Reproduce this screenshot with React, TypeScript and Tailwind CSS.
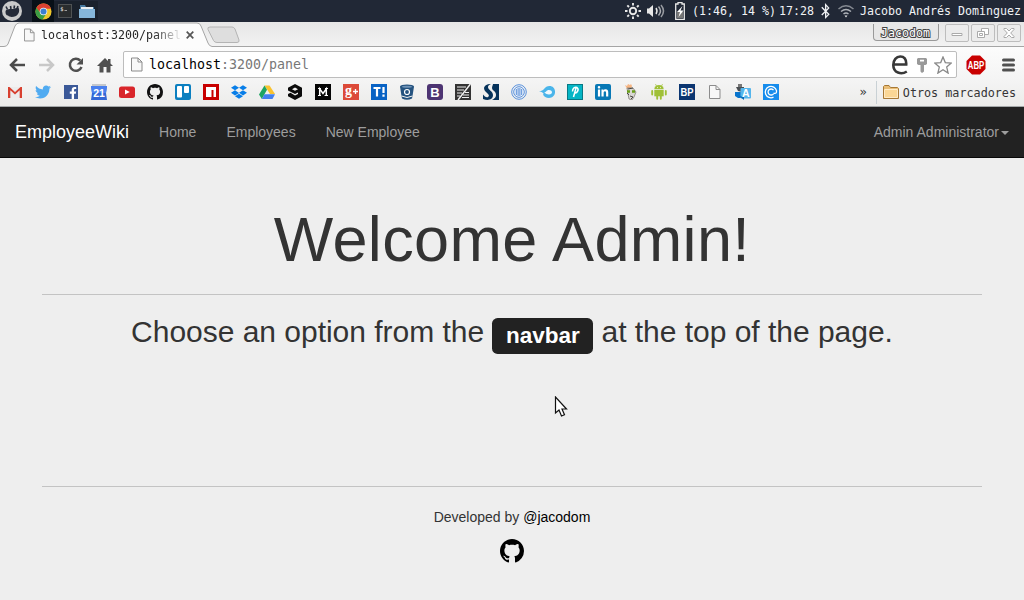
import type { ReactNode } from "react";
import { FaTwitter, FaFacebookF, FaDropbox, FaLinkedinIn, FaBluetoothB } from "react-icons/fa";

const GITHUB_MARK =
  "M8 0C3.58 0 0 3.58 0 8c0 3.54 2.29 6.53 5.47 7.59.4.07.55-.17.55-.38 0-.19-.01-.82-.01-1.49-2.01.37-2.53-.49-2.69-.94-.09-.23-.48-.94-.82-1.13-.28-.15-.68-.52-.01-.53.63-.01 1.08.58 1.23.82.72 1.21 1.87.87 2.33.66.07-.52.28-.87.51-1.07-1.78-.2-3.64-.89-3.64-3.95 0-.87.31-1.59.82-2.15-.08-.2-.36-1.02.08-2.12 0 0 .67-.21 2.2.82.64-.18 1.32-.27 2-.27s1.36.09 2 .27c1.53-1.04 2.2-.82 2.2-.82.44 1.1.16 1.92.08 2.12.51.56.82 1.27.82 2.15 0 3.07-1.87 3.75-3.65 3.95.29.25.54.73.54 1.48 0 1.07-.01 1.93-.01 2.2 0 .21.15.46.55.38A8.01 8.01 0 0 0 16 8c0-4.42-3.58-8-8-8z";

function GithubMark({ className }: { className: string }) {
  return (
    <svg viewBox="0 0 16 16" className={className} fill="currentColor">
      <path d={GITHUB_MARK} />
    </svg>
  );
}

function Icon16({ children }: { children: ReactNode }) {
  return (
    <svg viewBox="0 0 16 16" className="h-4 w-4 shrink-0">
      {children}
    </svg>
  );
}

function PageIcon({ className }: { className: string }) {
  return (
    <svg viewBox="0 0 12 14" className={className} fill="#f8f8f8" stroke="#8c8c8c">
      <path d="M.5.5h6.5l4 4v9H.5z" />
      <path d="M7 .5v4h4" fill="none" />
    </svg>
  );
}

function Glyph({ x = 8, y, size, children, family = "Liberation Sans, sans-serif", fill = "#fff", weight = 700 }: {
  x?: number; y: number; size: number; children: string; family?: string; fill?: string; weight?: number;
}) {
  return (
    <text x={x} y={y} fontSize={size} fontFamily={family} fontWeight={weight} fill={fill} textAnchor="middle">
      {children}
    </text>
  );
}

const bookmarks: ReactNode[] = [
  <Icon16>
    <path d="M1 3h14v11H1z" fill="#ececec" />
    <path d="M1 14V3h1.500L8 8l5.500-5H15v11h-2.300V6.200L8 10.400 3.300 6.200V14z" fill="#d8402f" />
  </Icon16>,
  <FaTwitter className="h-4 w-4 text-[#50abf1]" />,
  <span className="flex h-3.5 w-3.5 items-end justify-end bg-[#3b5998]">
    <FaFacebookF className="h-3 w-2.5 text-white" />
  </span>,
  <Icon16>
    <path d="M1 0h14v3H1z" fill="#c5c8cc" />
    <path d="M0 2h16l-1 7 1 7H0l1-7z" fill="#3367d6" />
    <path d="M0 2h16l-1 7H1z" fill="#4a80ee" />
    <Glyph y={12.8} size={10.5}>21</Glyph>
  </Icon16>,
  <Icon16>
    <rect y="2.500" width="16" height="11.500" rx="2.500" fill="#d9252a" />
    <path d="M6 5.500v5l4.800-2.500z" fill="#fff" />
  </Icon16>,
  <GithubMark className="h-4 w-4 text-[#111]" />,
  <Icon16>
    <rect width="16" height="16" rx="2" fill="#0b7fc0" />
    <rect x="2" y="2" width="5" height="11.500" rx="1" fill="#fff" />
    <rect x="9" y="2" width="5" height="7" rx="1" fill="#fff" />
  </Icon16>,
  <Icon16>
    <path d="M0 0h16v16H0z" fill="#c80000" />
    <path d="M3 3h10v10h-2.500V6H8.500v7H3z" fill="#fff" />
  </Icon16>,
  <FaDropbox className="h-4 w-4 text-[#087ee8]" />,
  <Icon16>
    <path d="M5.500 1.500h5L16 10h-5z" fill="#f9c22e" />
    <path d="M5.500 1.500 8 5.800 2.800 15 0 10.500z" fill="#1da462" />
    <path d="M5.500 10.300H16L13.500 15H2.800z" fill="#4280ef" />
  </Icon16>,
  <Icon16>
    <path d="M8 0 15 3.800v8.400L8 16l-7-3.700V10l2.500-1.200L8 11.500l3-1.600V8.500L8 10 1 6.500V3.800z" fill="#0b0b0b" />
    <path d="M5 5.200 8 3.500l3 1.700-3 1.600z" fill="#f0f0ef" />
  </Icon16>,
  <Icon16>
    <path d="M0 0h16v16H0z" fill="#050505" />
    <path d="M3 4.500h3M10 4.500h3M3 11.500h3M9.500 11.500H13" stroke="#fff" strokeWidth="1" />
    <path d="M4.700 11.500V4.800L8 9.500l3.300-4.700v6.700" fill="none" stroke="#fff" strokeWidth="1.500" />
  </Icon16>,
  <Icon16>
    <path d="M0 0h16v16H0z" fill="#dc4a38" />
    <Glyph x={5.5} y={10.8} size={14} family="Liberation Serif, serif" weight={700}>g</Glyph>
    <path d="M10 7.500h5M12.500 5v5" stroke="#fff" strokeWidth="1.300" />
  </Icon16>,
  <Icon16>
    <path d="M0 0h16v16H0z" fill="#0862c4" />
    <path d="M2.500 4h7M6 4v8.500M12.500 3v6M12.500 10.500v2.200" stroke="#fff" strokeWidth="2.200" />
  </Icon16>,
  <Icon16>
    <path d="m1 2.500 1.500 9.500L3 14.500q5 2.500 10 0l.5-2.500L15 2.500z" fill="#25537f" />
    <ellipse cx="8" cy="2.500" rx="7" ry="2" fill="#25537f" />
    <ellipse cx="8" cy="2.700" rx="5" ry="1" fill="#6f93b6" />
    <circle cx="8" cy="8" r="2.500" fill="#25537f" stroke="#fff" strokeWidth="1.200" />
    <path d="M2.500 12q5.500 3 11 0" fill="none" stroke="#f0f0ef" />
  </Icon16>,
  <Icon16>
    <rect width="16" height="16" rx="3" fill="#4d3472" />
    <Glyph y={12.5} size={13}>B</Glyph>
  </Icon16>,
  <Icon16>
    <path d="M0 0h16v16H0z" fill="#333" />
    <path d="M2 3h9M2 6h7M2 9h5M2 12h3M10 8.500h4M8 11h6M7 13.500h7" stroke="#eee" strokeWidth="1.100" />
    <path d="M15.500 0 3 16" stroke="#f4f4f4" strokeWidth="1.500" />
  </Icon16>,
  <Icon16>
    <path d="M10 0h6v16H9c4-2 5-5 3-8-1-1.500-3-2-3-4s1-3 1-4z" fill="#06335b" />
    <path d="M8 0C2 0-.5 3.500 2 7c2 2.500 5 3.500 3.500 5.500C4 14.500 1.500 12.500 0 10.500V15c5 2 10 .8 10-4 0-4-5-5-5-8 0-1.500 1.500-2.500 3-3z" fill="#06335b" />
  </Icon16>,
  <Icon16>
    <circle cx="8" cy="8" r="7.300" fill="none" stroke="#5790dd" strokeWidth="1" />
    <circle cx="8" cy="8" r="5.300" fill="#edf3fb" stroke="#5790dd" strokeWidth="1" />
    <path d="M5.300 5v6M7.100 4v8M8.900 4v8M10.700 5v6" stroke="#4581d4" strokeWidth=".9" />
  </Icon16>,
  <Icon16>
    <path d="M0 7c3 0 3.500-.5 5-2 1.500-2 3-3 5.500-3C18 2 18 14 10 14c-3 0-5-1.500-6-3.500C5.500 10 4 8 0 7z" fill="#4ab5ea" />
    <path d="M5 8.500c2.500 0 2-2.500 5-2.500 4 0 4 4.500 0 4.500-2 0-3-1-5-2z" fill="#eff9fe" />
  </Icon16>,
  <Icon16>
    <rect x=".5" y=".5" width="15" height="15" fill="#05b5c5" stroke="#087985" />
    <path d="M6.500 13 9 4M5.500 7.500C5.500 4 8 2.500 10 3.500c2.500 2 0 6-2.300 5.300" fill="none" stroke="#fff" strokeWidth="1.500" />
  </Icon16>,
  <span className="flex h-4 w-4 items-center justify-center rounded-xs bg-[#0878b5]">
    <FaLinkedinIn className="h-3 w-3 text-white" />
  </span>,
  <Icon16>
    <path d="m2 1 2 1 1-2 2 1 1-1 1 2-1 3H4z" fill="#f6b583" />
    <path d="M4 4h6l3 4-2 5-2 3-3-1-1-5z" fill="#d9d7d3" stroke="#77736d" strokeWidth=".7" />
    <path d="M4 7.500h3M9 7.500h3" stroke="#679f17" strokeWidth="2.300" />
    <path d="m5 5 5-1M7 12l3 1-2 2M4 9l2 2" stroke="#4a4844" fill="none" />
  </Icon16>,
  <Icon16>
    <path d="M3.300 5.300a4.700 4.200 0 0 1 9.400 0z" fill="#9fc037" />
    <path d="m5.500 2-1-1.800M10.500 2l1-1.800" stroke="#9fc037" strokeWidth=".8" />
    <path d="M6 3.600h.8M9.200 3.600h.8" stroke="#fff" strokeWidth=".9" />
    <path d="M3.300 6h9.400v6.300H3.300z" fill="#9fc037" />
    <path d="M1.200 7v3.500M14.800 7v3.500M6.200 11.500v3.300M9.800 11.500v3.300" stroke="#9fc037" strokeWidth="1.900" strokeLinecap="round" />
  </Icon16>,
  <Icon16>
    <path d="M0 0h16v16H0z" fill="#0c3671" />
    <text x="8" y="12" fontSize="11.500" fontFamily="Liberation Sans, sans-serif" fontWeight="700" fill="#fff" textAnchor="middle" textLength="13" lengthAdjust="spacingAndGlyphs">BP</text>
  </Icon16>,
  <PageIcon className="h-3.5 w-3" />,
  <Icon16>
    <path d="M1 3h8v2L7 8 3 7z" fill="#4a4e52" />
    <path d="M3 0h4v3H3z" fill="#777" />
    <path d="M0 8h7v6H3l-3-2z" fill="#0875cd" />
    <rect x="5.500" y="4" width="10.500" height="10.500" rx="1" fill="#54b5ec" />
    <path d="m4 12 5 4v-3z" fill="#0869b8" />
    <Glyph x={10.7} y={12.8} size={10.5}>A</Glyph>
  </Icon16>,
  <Icon16>
    <path d="M0 0h16v16H0z" fill="#168cec" />
    <path d="M10.500 6.200a3 3 0 1 0 0 3.600M10.500 9.200q3.500 1 3-2.500a5.700 5.700 0 1 0-3 6.500" fill="none" stroke="#fff" strokeWidth="1.300" />
  </Icon16>,
];

function SystemPanel() {
  return (
    <div className="flex h-[22px] items-center bg-[#212836] text-[11.63px] text-[#f0f2f5]">
      <svg viewBox="0 0 22 22" className="ml-px h-[22px] w-[22px]">
        <circle cx="11" cy="11" r="10" fill="#cacaca" />
        <path d="M4.500 12c0-3 3-3 7-3l6-1.500c1.500 3 .5 6.500-2.500 8.500-3 1-6 1.500-8-.5-2 0-2.500-2-2.500-3.500z" fill="#252b38" />
        <path d="m6.500 9.500-1.500-3M10 9 9.500 6M13 8.500l.5-3M16 8.500l1-2.500" stroke="#252b38" strokeWidth="1.600" />
      </svg>
      <div className="ml-[9px] flex h-[22px] w-[22px] items-center justify-center bg-[#081017] pt-px pl-px">
        <svg viewBox="0 0 18 18" className="h-[17px] w-[17px] shrink-0">
          <circle cx="9" cy="9" r="8.500" fill="#efc62b" />
          <path d="M1.500 5A8.500 8.500 0 0 1 17 6H9L6 11z" fill="#d94132" />
          <path d="M1.500 5A8.500 8.500 0 0 0 8 17.500l4-6-5 .5z" fill="#3b9d45" />
          <circle cx="9" cy="9" r="4" fill="#f4f4f4" />
          <circle cx="9" cy="9" r="3.200" fill="#3b7ed0" />
        </svg>
      </div>
      <div className="flex h-[20px] w-[21px] items-center justify-center bg-[#1a212c]">
        <svg viewBox="0 0 14 14" className="h-[14px] w-[14px]">
          <rect x=".5" y=".5" width="13" height="13" fill="#292c2e" stroke="#4f5254" />
          <Glyph x={4} y={6.5} size={5.5} fill="#ccc" family="DejaVu Sans Mono, monospace">$</Glyph>
          <path d="M6.500 6.500h2.500" stroke="#bbb" strokeWidth=".8" />
        </svg>
      </div>
      <div className="flex h-[20px] w-[23px] items-center justify-center bg-[#1a212c]">
        <svg viewBox="0 0 16 14" className="h-[14px] w-4">
          <path d="M1 1h5l1 2h8v10H1z" fill="#477aa1" />
          <path d="M2 3h12v2H2z" fill="#e8eef2" />
          <path d="M0 5h16v9H0z" fill="#86b6da" />
        </svg>
      </div>
      <div className="ml-auto flex items-center pr-[3px]">
        <svg viewBox="0 0 16 16" className="h-4 w-4" fill="none" stroke="#e7e7e7" strokeWidth="1.900">
          <circle cx="8" cy="8" r="3.200" />
          <path d="M8 0v2.500M8 13.500V16M0 8h2.500M13.500 8H16M2.300 2.300 4 4M12 12l1.700 1.700M2.300 13.700 4 12M12 4l1.700-1.700" />
        </svg>
        <svg viewBox="0 0 18 16" className="ml-[6px] h-4 w-[18px]" fill="none" stroke="#e7e7e7" strokeWidth="1.500">
          <path d="M0 5.500h2L6 2v12l-4-3.500H0z" fill="#e7e7e7" stroke="none" />
          <path d="M9 5q2 3 0 6" />
          <path d="M11.500 3.500q4 4.500 0 9" opacity=".7" />
          <path d="M14 2q5 6 0 12" opacity=".6" />
        </svg>
        <svg viewBox="0 0 10 18" className="ml-[10px] h-[18px] w-[10px]">
          <path d="M3 2V.5h4V2h2.300v15.300H.7V2z" fill="none" stroke="#e7e7e7" strokeWidth="1.300" />
          <path d="M2 10h6v6H2z" fill="#777" />
          <path d="M7.500 4 2 10h3l-1.500 5L8.500 8.500h-3z" fill="#fff" />
        </svg>
        <span className="ml-[7px] pt-[2px] whitespace-pre">(1:46, 14 %)</span>
        <span className="ml-[3px] pt-[2px]">17:28</span>
        <FaBluetoothB className="ml-[6px] h-4 w-[11px]" />
        <svg viewBox="0 0 16 14" className="ml-[7px] h-[14px] w-4" fill="none" stroke="#aeb2b8" strokeWidth="1.500">
          <path d="M.5 5Q8-1.500 15.500 5" opacity=".7" />
          <path d="M3 7.500q5-4 10 0M5.500 10q2.500-2 5 0" />
          <path d="m6.500 11.500 1.500 2 1.500-2z" fill="#e7e7e7" stroke="none" />
        </svg>
        <span className="ml-[6px] pt-[2px] whitespace-pre">Jacobo Andrés Dominguez</span>
      </div>
    </div>
  );
}

function WindowButton({ children }: { children: ReactNode }) {
  return (
    <span className="flex h-[18px] w-6 items-center justify-center rounded-xs border border-[#bdbdbd] bg-[#ececec]">
      <svg viewBox="0 0 14 12" className="h-3 w-[14px]" fill="#fff" stroke="#aaa" strokeWidth="1">
        {children}
      </svg>
    </span>
  );
}

function TabStrip() {
  return (
    <div className="relative flex h-[25px] items-start bg-gradient-to-b from-[#e6e6e6] to-[#f3f3f3]">
      <svg viewBox="0 0 1024 25" className="absolute inset-0 h-[25px] w-[1024px]">
        <path d="M0 24.500h4q3 0 4-2.500L15 4q1.500-3 4-3h178q3 0 4 3l7 17q1 3 4 3.500H1024V26H0z" fill="#fcfcfc" stroke="#a5a5a5" />
        <path d="M210 5h22q2 0 3 2l4 11q.5 2.500-2 2.500h-20q-2.500 0-3.500-2L208 7.500q-1-2.500 2-2.500z" fill="#dedede" stroke="#b4b4b4" />
      </svg>
      <div className="relative flex h-[25px] w-[208px] items-center pl-6">
        <PageIcon className="h-[14px] w-[11px] shrink-0" />
        <span className="ml-[6px] w-[141px] shrink-0 bg-gradient-to-r from-[#222] from-80% to-[#22222200] bg-clip-text text-[11.63px] leading-4 whitespace-nowrap text-transparent">
          localhost:3200/panel
        </span>
        <svg viewBox="0 0 8 8" className="ml-[4px] h-2 w-2 shrink-0" stroke="#555" strokeWidth="1.700">
          <path d="m.7.7 6.600 6.600m0-6.600L.7 7.300" />
        </svg>
      </div>
      <div className="relative ml-auto flex items-start gap-[2px] pr-[3px]">
        <span className="mr-1 mt-[2px] flex h-[17px] w-[66px] items-center justify-center rounded-b border border-t-0 border-[#999] bg-[#e7e7e7]">
          <svg viewBox="0 0 52 14" className="h-[14px] w-[52px]">
            <text x="1" y="12" fontSize="11.630" fontFamily="DejaVu Sans Mono, monospace" fill="#fff" stroke="#444" strokeWidth="2" paintOrder="stroke">Jacodom</text>
          </svg>
        </span>
        <span className="mt-[2px] flex gap-[2px]">
          <WindowButton><path d="M2 6.500h10v2H2z" /></WindowButton>
          <WindowButton>
            <path d="M5.500 1.500h7v6h-7z" />
            <path d="M1.500 4.500h7v6h-7z" />
            <path d="M3.500 6.500h3v2h-3z" />
          </WindowButton>
          <WindowButton><path d="M2 1.500h2.500L7 4l2.500-2.500H12v1L8.700 6 12 9.500v1H9.500L7 8l-2.500 2.500H2v-1L5.300 6 2 2.500z" /></WindowButton>
        </span>
      </div>
    </div>
  );
}

function Toolbar() {
  return (
    <div className="flex h-[33px] items-center bg-gradient-to-b from-[#fcfcfc] to-[#f4f4f4] pt-[2px]">
      <svg viewBox="0 0 16 14" className="ml-[9px] h-[14px] w-4" fill="none" stroke="#4c4c4c" strokeWidth="2.500">
        <path d="M2 7h14M8 1 2 7l6 6" />
      </svg>
      <svg viewBox="0 0 16 14" className="ml-[14px] h-[14px] w-4" fill="none" stroke="#c8c8c8" strokeWidth="2.500">
        <path d="M0 7h14M8 1l6 6-6 6" />
      </svg>
      <svg viewBox="0 0 16 16" className="ml-[13px] h-4 w-4" fill="none" stroke="#505050" strokeWidth="2.500">
        <path d="M12.300 3.700A6 6 0 1 0 13.500 10" />
        <path d="M15 1v6.500H8.500z" fill="#505050" stroke="none" />
      </svg>
      <svg viewBox="0 0 16 16" className="ml-[13px] h-4 w-4" fill="#505050">
        <path d="M8 1 0 9h2.500v6.500h4V10h3v5.500h4V9H16l-2.500-2.500V2H11v2z" />
      </svg>
      <div className="ml-[10px] flex h-[27px] w-[834px] items-center rounded-xs border border-[#bdbdbd] bg-white">
        <PageIcon className="ml-[7px] h-[15px] w-[12px]" />
        <span className="ml-[6px] pt-px text-[13.29px] text-[#777]">
          <span className="text-black">localhost</span>:3200/panel
        </span>
        <span className="ml-auto flex items-center">
          <svg viewBox="0 0 18 20" className="h-5 w-[18px]" fill="none" stroke="#383838" strokeWidth="2.600">
            <path d="M2.500 9.500h12.700C15.500 4 13 1.500 9.200 1.500S2.300 5 2.300 10c0 8 8 10 13.500 6.500" />
          </svg>
          <svg viewBox="0 0 10 16" className="ml-[8px] h-4 w-[10px]" fill="#999">
            <path d="M1 1h8l1 1v5L8.500 8H7v6.500L5 16l-1.500-1.500V8h-2L0 7V2zM3 2.800v1.700h4V2.800z" fillRule="evenodd" />
          </svg>
          <svg viewBox="0 0 18 18" className="ml-[7px] mr-[4px] h-[18px] w-[18px]" fill="#fff" stroke="#888" strokeWidth="1.300">
            <path d="m9 1 2.300 5.600 6 .5-4.600 4 1.400 6L9 13.800l-5.100 3.300 1.400-6-4.600-4 6-.5z" />
          </svg>
        </span>
      </div>
      <svg viewBox="0 0 20 20" className="ml-[9px] h-5 w-5">
        <path d="M6 .5h8L19.500 6v8L14 19.500H6L.5 14V6z" fill="#c90000" />
        <text x="10" y="13.700" textLength="16.500" fontSize="10" fontWeight="700" fontFamily="Liberation Sans, sans-serif" fill="#fff" textAnchor="middle" lengthAdjust="spacingAndGlyphs">ABP</text>
      </svg>
      <svg viewBox="0 0 13 14" className="ml-[16px] h-[14px] w-[13px]" stroke="#505050" strokeWidth="3" strokeLinecap="round">
        <path d="M1.500 2h10M1.500 7h10M1.500 12h10" />
      </svg>
    </div>
  );
}

function BookmarksBar() {
  return (
    <div className="flex h-[27px] items-center border-b border-[#a4a8a9] bg-gradient-to-b from-[#f4f4f4] to-[#ececea] pb-[2px] pl-px text-[11.75px] text-[#353535]">
      {bookmarks.map((icon, i) => (
        <span key={i} className="flex h-6 w-7 shrink-0 items-center justify-center">
          {icon}
        </span>
      ))}
      <span className="ml-auto mr-[9px] text-[12px]">»</span>
      <span className="h-[23px] w-px bg-[#c9d1d5]" />
      <svg viewBox="0 0 16 14" className="ml-[6px] h-[14px] w-4" stroke="#a77936">
        <path d="M.5 13.500v-12L1.500.5H6L7.500 2.500h7l1 1v10z" fill="#e9bd75" />
        <path d="M1.500 12.500v-8h13v8z" fill="#fbd795" stroke="#ffebc5" />
      </svg>
      <span className="ml-[4px] mr-[8px] pt-[4px] whitespace-pre">Otros marcadores</span>
    </div>
  );
}

export default function App() {
  return (
    <div className="relative flex h-[600px] w-[1024px] flex-col overflow-hidden bg-[#eee] font-['DejaVu_Sans_Mono',monospace]">
      <SystemPanel />
      <TabStrip />
      <Toolbar />
      <BookmarksBar />

      <div className="flex flex-1 flex-col font-['Liberation_Sans',Arial,sans-serif] text-[#333]">
        <nav className="flex h-[51px] shrink-0 items-center border-b border-[#080808] bg-[#222] px-[15px] text-sm text-[#9d9d9d]">
          <a className="mr-[30px] text-lg text-white">EmployeeWiki</a>
          <a className="mr-[30px]">Home</a>
          <a className="mr-[30px]">Employees</a>
          <a>New Employee</a>
          <a className="ml-auto flex items-center">
            Admin Administrator
            <span className="ml-[2px] mt-px border-x-4 border-t-4 border-x-transparent border-t-[#9d9d9d]" />
          </a>
        </nav>

        <main className="flex flex-col px-[42px] pt-[47px] text-center">
          <h1 className="text-[63px] leading-[69px] tracking-[0.35px]">Welcome Admin!</h1>
          <hr className="mt-[20px] border-[#c3c3c3]" />
          <h2 className="mt-5 text-[30px] leading-[33px] tracking-[-0.02px]">
            Choose an option from the{" "}
            <span className="rounded-[5.6px] bg-[#222] px-[13.5px] pt-[4.5px] pb-[6.75px] align-baseline text-[22.5px] leading-none font-bold text-white">
              navbar
            </span>{" "}
            at the top of the page.
          </h2>
        </main>

        <footer className="mx-[42px] mt-[138px] flex flex-col items-center border-t border-[#c3c3c3] pt-5 text-sm">
          <p>
            Developed by <a className="text-black">@jacodom</a>
          </p>
          <GithubMark className="mt-[12px] h-6 w-6 text-black" />
        </footer>
      </div>

      <svg viewBox="0 0 14 22" className="absolute left-[554px] top-[396px] h-[22px] w-[14px]">
        <path d="M1.500 1v16l3.500-3 2.500 6 3-1.300L8 13h4.500z" fill="#fff" stroke="#111" strokeWidth="1.200" />
      </svg>
    </div>
  );
}
